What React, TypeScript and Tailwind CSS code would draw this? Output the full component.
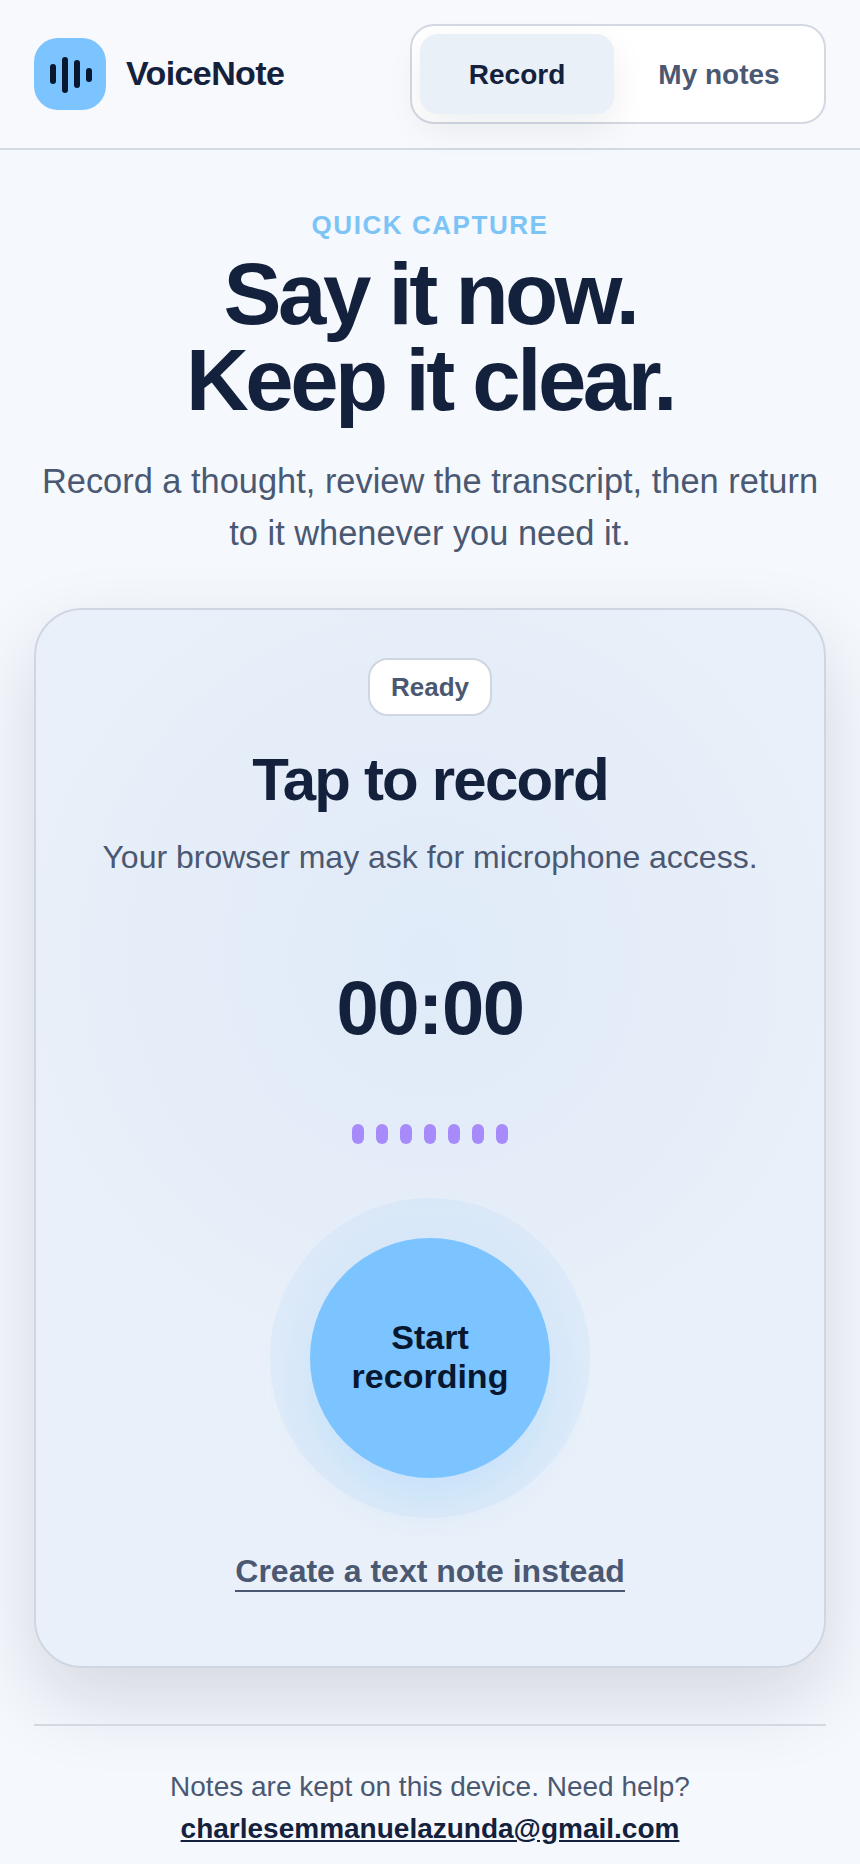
export default function App() {
  return (
    <div className="min-h-[1864px] bg-[#f5f8fd] font-['Liberation_Sans',Arial,sans-serif] text-[#14213d]">
      <header className="flex h-[150px] items-center justify-between border-b-2 border-[#d3d8e3] bg-[#f7f9fc] px-[34px]">
        <div className="flex items-center gap-5">
          <div className="h-[72px] w-[72px] rounded-[24px] bg-[#7cc4ff]">
            <svg width="72" height="72" viewBox="0 0 72 72" fill="none" stroke="#071730" strokeWidth="6" strokeLinecap="round">
              <path d="M19 29V43" />
              <path d="M31 22V52" />
              <path d="M43 25V47" />
              <path d="M55 33V41" />
            </svg>
          </div>
          <span className="relative top-[-1px] text-[34px] font-bold tracking-[-0.018em]">VoiceNote</span>
        </div>
        <nav className="flex h-[100px] w-[416px] gap-2 rounded-[24px] border-2 border-[#d3d8e3] bg-white p-2">
          <button className="h-full flex-1 rounded-[18px] bg-[#e9f0f8] pt-[2px] text-[28px] font-bold text-[#14213d] shadow-[0_14px_36px_rgba(15,23,42,0.07)]">Record</button>
          <button className="h-full flex-1 rounded-[18px] pt-[2px] text-[28px] font-bold text-[#4a5872]">My notes</button>
        </nav>
      </header>
      <main className="px-[34px] pt-[59px]">
        <section className="flex flex-col items-center text-center">
          <p className="text-[26px] leading-[32px] font-bold tracking-[0.06em] text-[#7cc4f5]">QUICK CAPTURE</p>
          <h1 className="mt-[10px] text-[87px] leading-[86px] font-bold tracking-[-0.04em]">
            Say it now.
            <br />
            Keep it clear.
          </h1>
          <p className="mt-[32px] w-[792px] text-[34.4px] leading-[52px] text-[#4a5872]">
            Record a thought, review the transcript, then return to it whenever you need it.
          </p>
        </section>
        <section className="mt-[49px] flex h-[1060px] flex-col items-center rounded-[48px] border-2 border-[#cfd6e2] bg-[radial-gradient(circle_at_50%_33%,#e0ebf9_0px,#e5edf8_280px,#e9f0f9_420px)] pt-[48px] shadow-[0_32px_80px_rgba(15,23,42,0.14)]">
          <span className="flex h-[58px] w-[124px] items-center justify-center rounded-[20px] border-2 border-[#cfd6e2] bg-white text-[26px] font-bold text-[#4a5872]">Ready</span>
          <h2 className="mt-[29px] text-[60px] leading-[70px] font-bold tracking-[-0.03em]">Tap to record</h2>
          <p className="mt-[20px] text-[32px] leading-[44px] text-[#4a5872]">Your browser may ask for microphone access.</p>
          <div className="mt-[85px] text-[76px] leading-[88px] font-bold tracking-[-0.02em]">00:00</div>
          <div className="mt-[72px] flex gap-3">
            {[0, 1, 2, 3, 4, 5, 6].map((i) => (
              <span key={i} className="h-5 w-3 rounded-full bg-[#a78bfa]" />
            ))}
          </div>
          <button className="mt-[94px] flex h-[240px] w-[240px] items-center justify-center rounded-full bg-[#7cc4ff] pb-[2px] text-[34px] leading-[39px] font-bold text-[#071730] shadow-[0_0_0_40px_rgba(124,196,255,0.1),0_24px_48px_rgba(124,196,255,0.24)]">
            Start
            <br />
            recording
          </button>
          <a className="mt-[74px] border-b-2 border-[#4a5872] text-[32px] leading-[38px] font-bold text-[#4a5872]">Create a text note instead</a>
        </section>
        <footer className="mt-[56px] border-t-2 border-[#d3d8e3] pt-[40px] text-center">
          <p className="text-[28px] leading-[42px] text-[#4a5872]">Notes are kept on this device. Need help?</p>
          <a className="text-[28px] leading-[42px] font-bold text-[#14213d] underline">charlesemmanuelazunda@gmail.com</a>
        </footer>
      </main>
    </div>
  );
}
